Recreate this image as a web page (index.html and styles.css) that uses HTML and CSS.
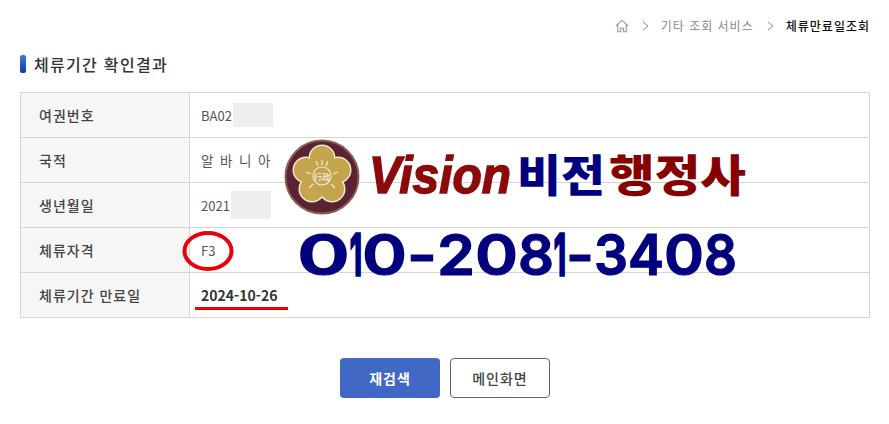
FILE: index.html
```html
<!DOCTYPE html>
<html lang="ko">
<head>
  <meta charset="UTF-8" />
  <meta name="viewport" content="width=device-width, initial-scale=1.0"/>
  <title>체류만료일조회</title>
  <link rel="stylesheet" href="styles.css">
</head>
<body>
  <div class="page-wrapper">
    <div class="breadcrumb">
      <svg class="home-icon" viewBox="0 0 14 14" width="14" height="14">
        <path d="M1 7 L7 1.2 L13 7 M2.8 5.6 V12.8 H5.6 V9 H8.4 V12.8 H11.2 V5.6" fill="none" stroke="#999" stroke-width="1.1"/>
      </svg>
      <svg class="crumb-arrow" viewBox="0 0 7 10" width="7" height="10"><path d="M1 1 L6 5 L1 9" fill="none" stroke="#888" stroke-width="1"/></svg>
      <span class="crumb">기타 조회 서비스</span>
      <svg class="crumb-arrow" viewBox="0 0 7 10" width="7" height="10"><path d="M1 1 L6 5 L1 9" fill="none" stroke="#888" stroke-width="1"/></svg>
      <span class="crumb crumb-current">체류만료일조회</span>
    </div>

    <h2 class="section-title"><span class="title-mark"></span>체류기간 확인결과</h2>

    <div class="result-table">
      <div class="result-row">
        <div class="result-label">여권번호</div>
        <div class="result-value">BA02<span class="masked masked-passport"></span></div>
      </div>
      <div class="result-row">
        <div class="result-label">국적</div>
        <div class="result-value spaced">알 바 니 아</div>
      </div>
      <div class="result-row">
        <div class="result-label">생년월일</div>
        <div class="result-value">2021<span class="masked masked-birth"></span></div>
      </div>
      <div class="result-row">
        <div class="result-label">체류자격</div>
        <div class="result-value">F3</div>
      </div>
      <div class="result-row">
        <div class="result-label">체류기간 만료일</div>
        <div class="result-value result-date">2024-10-26</div>
      </div>
    </div>

    <div class="button-row">
      <button class="btn btn-primary">재검색</button>
      <button class="btn btn-outline">메인화면</button>
    </div>
  </div>

  <!-- pasted-on watermark and red marks -->
  <svg class="overlay" viewBox="0 0 889 424" width="889" height="424">
    <ellipse cx="208" cy="251" rx="23.5" ry="18" fill="none" stroke="#e8000b" stroke-width="4"/>
    <rect x="195" y="307" width="93" height="3" fill="#e8000b"/>

    <circle cx="322" cy="177" r="36.5" fill="#5b2233" stroke="#8a5c50" stroke-width="2"/>
    <g fill="#c4a44c" stroke="#f3ead0" stroke-width="3">
      <circle cx="322" cy="158" r="12"/>
      <circle cx="338" cy="170" r="12"/>
      <circle cx="332" cy="189" r="12"/>
      <circle cx="312" cy="189" r="12"/>
      <circle cx="306" cy="170" r="12"/>
    </g>
    <g fill="#c4a44c">
      <circle cx="322" cy="158" r="12"/>
      <circle cx="338" cy="170" r="12"/>
      <circle cx="332" cy="189" r="12"/>
      <circle cx="312" cy="189" r="12"/>
      <circle cx="306" cy="170" r="12"/>
      <circle cx="322" cy="175" r="14"/>
    </g>
    <g stroke="#f3ead0" stroke-width="1.2">
      <path d="M322 160 V165 M316 161 L318 166 M328 161 L326 166 M306 172 L311 174 M338 172 L333 174 M309 188 L313 184 M335 188 L331 184"/>
    </g>
    <circle cx="322" cy="176" r="9" fill="#c4a44c" stroke="#f3ead0" stroke-width="1.2"/>
    <text x="322" y="180" class="seal-text" text-anchor="middle">行政</text>

    <text x="369" y="193" class="vision-text" textLength="142" lengthAdjust="spacingAndGlyphs">Vision</text>
    <text x="517" y="192" class="hangul-text navy" textLength="88" lengthAdjust="spacingAndGlyphs">비전</text>
    <text x="609" y="192" class="hangul-text maroon" textLength="137" lengthAdjust="spacingAndGlyphs">행정사</text>
    <text y="275" class="phone-text"><tspan x="297" textLength="53" lengthAdjust="spacingAndGlyphs">0</tspan><tspan class="phone-one" x="350" textLength="12" lengthAdjust="spacingAndGlyphs">1</tspan><tspan x="362" textLength="45" lengthAdjust="spacingAndGlyphs">0</tspan><tspan x="407" textLength="30" lengthAdjust="spacingAndGlyphs">-</tspan><tspan x="437" textLength="38" lengthAdjust="spacingAndGlyphs">2</tspan><tspan x="475" textLength="43" lengthAdjust="spacingAndGlyphs">0</tspan><tspan x="518" textLength="36" lengthAdjust="spacingAndGlyphs">8</tspan><tspan class="phone-one" x="554" textLength="12" lengthAdjust="spacingAndGlyphs">1</tspan><tspan x="566" textLength="28" lengthAdjust="spacingAndGlyphs">-</tspan><tspan x="594" textLength="34" lengthAdjust="spacingAndGlyphs">3</tspan><tspan x="628" textLength="36" lengthAdjust="spacingAndGlyphs">4</tspan><tspan x="664" textLength="40" lengthAdjust="spacingAndGlyphs">0</tspan><tspan x="704" textLength="33" lengthAdjust="spacingAndGlyphs">8</tspan></text>
  </svg>
</body>
</html>
```

FILE: styles.css
```css
body {
  margin: 0;
  font-family: "Noto Sans CJK KR", "Noto Sans", sans-serif;
  background: #fff;
  color: #333;
}
.page-wrapper {
  width: 889px;
  height: 424px;
  padding: 0 19px 0 20px;
  box-sizing: border-box;
  overflow: hidden;
}
.breadcrumb {
  display: flex;
  align-items: center;
  justify-content: flex-end;
  height: 51px;
  font-size: 12px;
  color: #888;
}
.home-icon {
  margin-right: 13px;
}
.crumb-arrow {
  margin-right: 12px;
}
.crumb {
  margin-right: 13px;
  letter-spacing: 1px;
}
.crumb-current {
  margin-right: 0;
  color: #111;
  font-weight: 500;
}
.section-title {
  display: flex;
  align-items: center;
  height: 26px;
  margin: 0 0 15px;
  font-size: 16px;
  font-weight: 500;
  letter-spacing: 1.3px;
  color: #333;
}
.title-mark {
  width: 6px;
  height: 18px;
  margin-right: 8px;
  border-radius: 2px;
  background: linear-gradient(#3b7de0, #0a3aa8);
}
.result-table {
  border: 1px solid #d5d5d5;
  border-bottom: none;
}
.result-row {
  display: flex;
  height: 45px;
  box-sizing: border-box;
  border-bottom: 1px solid #d5d5d5;
}
.result-label {
  display: flex;
  align-items: center;
  width: 169px;
  padding-left: 18px;
  box-sizing: border-box;
  background: #f6f6f6;
  border-right: 1px solid #d5d5d5;
  font-size: 14px;
  font-weight: 500;
  letter-spacing: 1px;
  color: #444;
}
.result-value {
  display: flex;
  align-items: center;
  padding-left: 11px;
  font-size: 13px;
  color: #555;
}
.result-value.spaced {
  font-size: 13.5px;
  letter-spacing: 1.4px;
}
.result-date {
  font-weight: 700;
  font-size: 14px;
  color: #333;
}
.masked {
  display: inline-block;
  width: 40px;
  margin-left: 1px;
  background: #eee;
}
.masked-passport {
  height: 24px;
}
.masked-birth {
  height: 28px;
}
.button-row {
  display: flex;
  justify-content: center;
  gap: 10px;
  margin-top: 40px;
}
.btn {
  width: 100px;
  height: 40px;
  border-radius: 4px;
  box-sizing: border-box;
  font-family: inherit;
  font-size: 14px;
  font-weight: 700;
  letter-spacing: 1px;
}
.btn-primary {
  background: #4068c4;
  border: none;
  color: #fff;
}
.btn-outline {
  background: #fff;
  border: 1px solid #666;
  color: #444;
  font-weight: 500;
}
.overlay {
  position: absolute;
  top: 0;
  left: 0;
}
.seal-text {
  font-size: 8px;
  font-family: "Noto Sans CJK KR", sans-serif;
  fill: #fff;
}
.vision-text {
  font-family: "Liberation Sans", sans-serif;
  font-size: 52px;
  font-weight: 700;
  font-style: italic;
  fill: #8b0a0a;
  stroke: #8b0a0a;
  stroke-width: 1.5px;
}
.hangul-text {
  font-family: "Noto Sans CJK KR", sans-serif;
  font-size: 44px;
  font-weight: 900;
}
.navy {
  fill: #00007f;
}
.maroon {
  fill: #860000;
}
.phone-text {
  font-family: "Inter", "Liberation Sans", sans-serif;
  font-size: 57px;
  font-weight: 600;
  fill: #00007f;
  stroke: #00007f;
  stroke-width: 1.2px;
}
.phone-one {
  stroke-width: 3.5px;
}
```
